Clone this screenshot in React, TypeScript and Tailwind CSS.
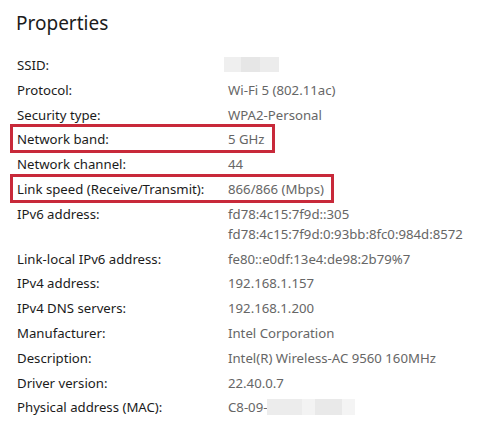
import React from "react";

type Row = { label: string; value: React.ReactNode; boxed?: boolean };

const rows: Row[] = [
  { label: "SSID:", value: <span className="inline-block h-[15px] w-[55px] -ml-[4px] bg-[linear-gradient(90deg,#efefef_0%,#efefef_30%,#e6e6e6_30%,#e6e6e6_65%,#ececec_65%,#ececec_100%)] align-[-2px]" /> },
  { label: "Protocol:", value: "Wi-Fi 5 (802.11ac)" },
  { label: "Security type:", value: "WPA2-Personal" },
  { label: "Network band:", value: "5 GHz", boxed: true },
  { label: "Network channel:", value: "44" },
  { label: "Link speed (Receive/Transmit):", value: "866/866 (Mbps)", boxed: true },
  {
    label: "IPv6 address:",
    value: (
      <>
        <div>fd78:4c15:7f9d::305</div>
        <div>fd78:4c15:7f9d:0:93bb:8fc0:984d:8572</div>
      </>
    ),
  },
  { label: "Link-local IPv6 address:", value: "fe80::e0df:13e4:de98:2b79%7" },
  { label: "IPv4 address:", value: "192.168.1.157" },
  { label: "IPv4 DNS servers:", value: "192.168.1.200" },
  { label: "Manufacturer:", value: "Intel Corporation" },
  { label: "Description:", value: "Intel(R) Wireless-AC 9560 160MHz" },
  { label: "Driver version:", value: "22.40.0.7" },
  {
    label: "Physical address (MAC):",
    value: (
      <span className="inline-flex items-center">
        C8-09-
        <span className="inline-block h-[16px] w-[88px] bg-[linear-gradient(90deg,#ececec_0%,#ececec_40%,#f3f3f3_40%,#f3f3f3_55%,#e9e9e9_55%,#e9e9e9_85%,#f4f4f4_85%)]" />
      </span>
    ),
  },
];

export default function App() {
  return (
    <div
      className="w-[494px] h-[423px] bg-white overflow-hidden"
      style={{ fontFamily: '"Noto Sans", "Open Sans", sans-serif' }}
    >
      <div className="pl-[16px] pt-[9px] text-[19px] leading-[28px] text-[#1b1b1b]">Properties</div>
      <div className="pl-[17px] pt-[18px] flex flex-col gap-y-[4.8px] text-[13.2px] leading-[20px]">
        {rows.map((r, i) => (
          <div key={i} className="relative flex w-fit">
            {r.boxed && (
              <span className="absolute -left-[7px] -right-[10px] -top-[5px] -bottom-[4px] border-[3px] border-[#c8293a]" />
            )}
            <div className="w-[211px] shrink-0 text-[#1b1b1b]">{r.label}</div>
            <div className="text-[#666666]">{r.value}</div>
          </div>
        ))}
      </div>
    </div>
  );
}
